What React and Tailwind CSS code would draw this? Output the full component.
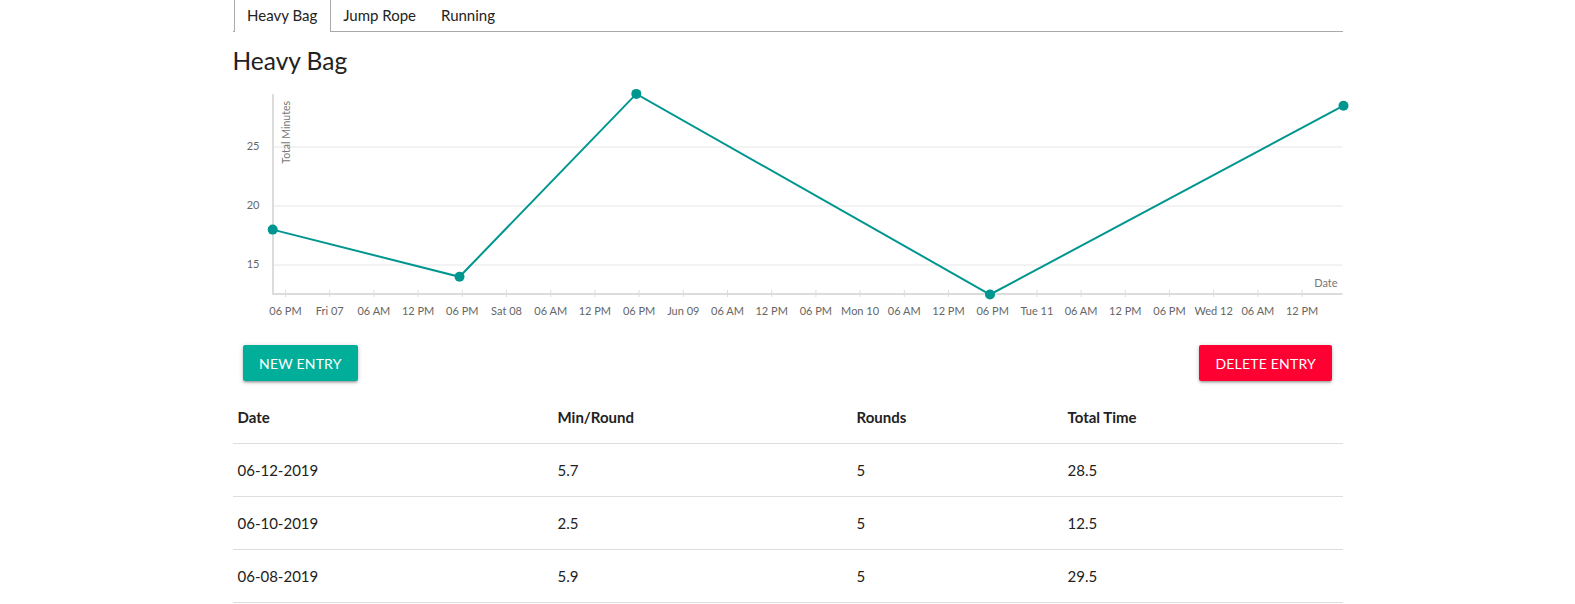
import React, { useState } from "react";

const tabs = ["Heavy Bag", "Jump Rope", "Running"];

const tickLabels = [
  "06 PM", "Fri 07", "06 AM", "12 PM", "06 PM", "Sat 08", "06 AM", "12 PM",
  "06 PM", "Jun 09", "06 AM", "12 PM", "06 PM", "Mon 10", "06 AM", "12 PM",
  "06 PM", "Tue 11", "06 AM", "12 PM", "06 PM", "Wed 12", "06 AM", "12 PM",
];

// chart points: x in px from chart origin, value in minutes
const points = [
  { x: 39.7, v: 18 },
  { x: 226.5, v: 14 },
  { x: 403.3, v: 29.5 },
  { x: 757, v: 12.5 },
  { x: 1110.5, v: 28.5 },
];

const rows = [
  { date: "06-12-2019", min: "5.7", rounds: "5", total: "28.5" },
  { date: "06-10-2019", min: "2.5", rounds: "5", total: "12.5" },
  { date: "06-08-2019", min: "5.9", rounds: "5", total: "29.5" },
];

const yFor = (v) => 178 - (v - 15) * 11.8;

const Chart = () => {
  const path = points.map((p, i) => `${i === 0 ? "M" : "L"}${p.x} ${yFor(p.v)}`).join(" ");
  return (
    <svg width="1116" height="236" className="block overflow-visible" style={{ fontFamily: "Lato, sans-serif" }}>
      {/* grid */}
      {[25, 20, 15].map((v) => (
        <g key={v}>
          <line x1="40" x2="1109.5" y1={yFor(v)} y2={yFor(v)} stroke="#e6e6e6" strokeWidth="1" />
          <text x="26.5" y={yFor(v)} textAnchor="end" dominantBaseline="middle" fontSize="11" fill="#666">
            {v}
          </text>
        </g>
      ))}
      <line x1="40" x2="40" y1="7" y2="208" stroke="#dcdcdc" strokeWidth="2" />
      <line x1="40" x2="1109.5" y1="207" y2="207" stroke="#dcdcdc" strokeWidth="2" />
      <text transform="translate(57,14) rotate(-90)" textAnchor="end" fontSize="10.5" fill="#777">
        Total Minutes
      </text>
      <text x="1104.5" y="197" textAnchor="end" dominantBaseline="middle" fontSize="11" fill="#777">
        Date
      </text>
      {tickLabels.map((label, i) => {
        const x = 52.5 + 44.2 * i;
        return (
          <g key={i}>
            <line x1={x} x2={x} y1="203" y2="210" stroke="#dcdcdc" strokeWidth="1" />
            <text x={x} y="225" textAnchor="middle" dominantBaseline="middle" fontSize="11" fill="#666">
              {label}
            </text>
          </g>
        );
      })}
      <path d={path} fill="none" stroke="#009690" strokeWidth="2" />
      {points.map((p, i) => (
        <circle key={i} cx={p.x} cy={yFor(p.v)} r="5" fill="#009690" />
      ))}
    </svg>
  );
};

const btnShadow =
  "shadow-[0_2px_2px_0_rgba(0,0,0,0.14),0_3px_1px_-2px_rgba(0,0,0,0.12),0_1px_5px_0_rgba(0,0,0,0.2)]";

export default function App() {
  const [active, setActive] = useState("Heavy Bag");

  return (
    <div className="min-h-screen bg-white text-[#222] font-['Lato',sans-serif]">
      <div className="mx-auto w-[1110px]">
        {/* tabs */}
        <div className="flex border-b border-[#aaa] pl-px">
          {tabs.map((t) => (
            <button
              key={t}
              onClick={() => setActive(t)}
              className={
                t === active
                  ? "h-[32px] px-[12.5px] pb-px -mb-px text-[15px] border-x border-[#aaa] bg-white"
                  : "h-[31px] px-[12.5px] text-[15px]"
              }
            >
              {t}
            </button>
          ))}
        </div>

        <h2 className="mt-[14px] text-[24.5px] leading-[30px] text-[#222]">{active}</h2>

        <div className="mt-[11px]">
          <Chart />
        </div>

        <div className="mt-[22px] flex justify-between px-[10.5px]">
          <button className={`h-9 px-4 rounded-[2px] bg-[#00ae99] text-white text-[14px] tracking-[0.2px] uppercase ${btnShadow}`}>
            New Entry
          </button>
          <button className={`h-9 px-4 rounded-[2px] bg-[#ff0033] text-white text-[14px] tracking-[0.2px] uppercase ${btnShadow}`}>
            Delete Entry
          </button>
        </div>

        <div className="mt-[10px] text-[15px]">
          <div className="grid grid-cols-[320px_299px_211px_1fr] h-[53px] items-center border-b border-[#dedede] font-bold pl-[5px]">
            <span>Date</span>
            <span>Min/Round</span>
            <span>Rounds</span>
            <span>Total Time</span>
          </div>
          {rows.map((r) => (
            <div
              key={r.date}
              className="grid grid-cols-[320px_299px_211px_1fr] h-[53px] items-center border-b border-[#dedede] pl-[5px]"
            >
              <span>{r.date}</span>
              <span>{r.min}</span>
              <span>{r.rounds}</span>
              <span>{r.total}</span>
            </div>
          ))}
        </div>
      </div>
    </div>
  );
}
